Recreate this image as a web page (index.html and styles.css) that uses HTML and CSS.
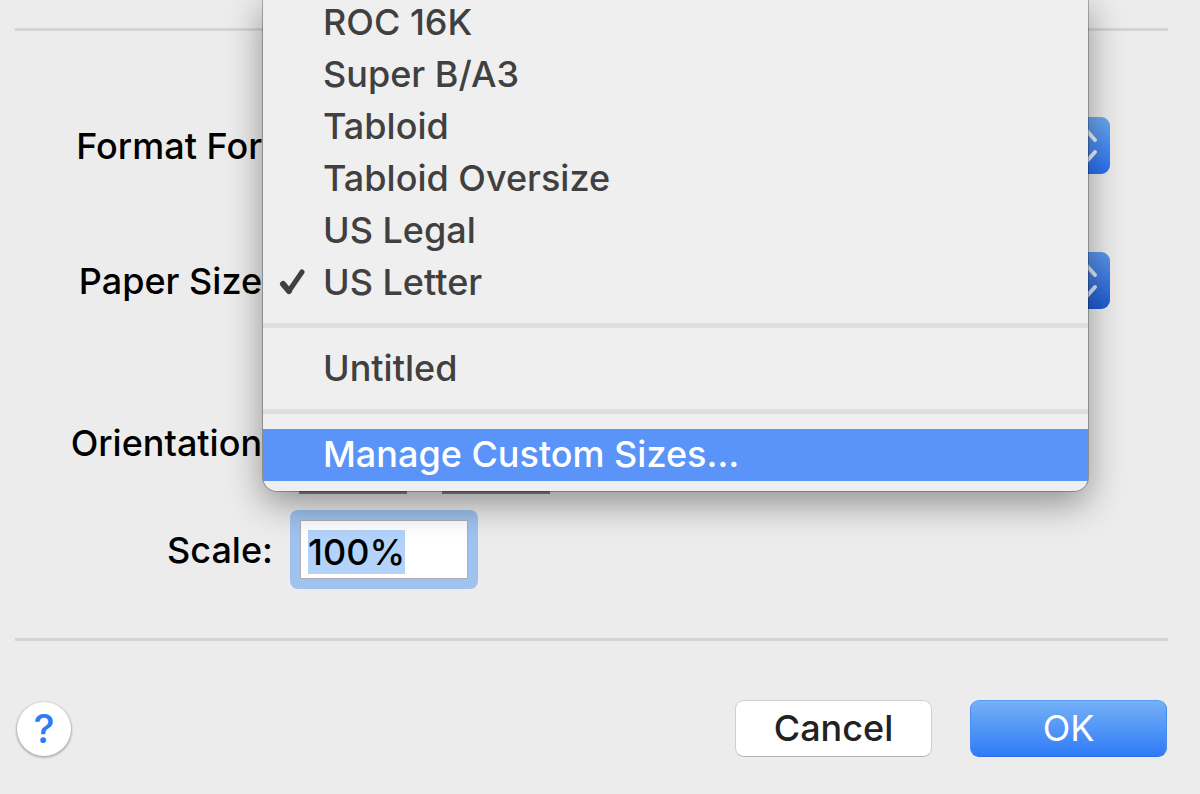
FILE: index.html
```
<!DOCTYPE html>
<html lang="en">

<head>
    <meta charset="UTF-8">
    <title>Page Setup</title>
    <link rel="stylesheet" href="styles.css">
</head>

<body>

    <form class="dialog">
        <hr class="divider">

        <div class="fields">
            <div class="row">
                <label class="label" for="format">Format For:</label>
                <div class="popup">
                    <select id="format" class="popup-select">
                        <option>Any Printer</option>
                    </select>
                    <svg class="popup-arrows" viewBox="0 0 44 57" fill="none" stroke="#eef4fb" stroke-width="4" stroke-linecap="round" stroke-linejoin="round">
                        <path d="M13 23 L21 14 L29 23 M13 35 L21 44 L29 35" />
                    </svg>
                </div>
            </div>

            <div class="row row-paper">
                <label class="label" for="paper">Paper Size:</label>
                <div class="popup popup-open">
                    <select id="paper" class="popup-select">
                        <option>US Letter</option>
                    </select>
                    <svg class="popup-arrows" viewBox="0 0 44 57" fill="none" stroke="#dfe9f8" stroke-width="4" stroke-linecap="round" stroke-linejoin="round">
                        <path d="M13 23 L21 14 L29 23 M13 35 L21 44 L29 35" />
                    </svg>
                </div>
            </div>

            <div class="row row-orientation">
                <span class="label">Orientation:</span>
                <div class="orientation">
                    <button type="button" class="orientation-btn" aria-label="Portrait"></button>
                    <button type="button" class="orientation-btn" aria-label="Landscape"></button>
                </div>
            </div>

            <div class="row row-scale">
                <label class="label" for="scale">Scale:</label>
                <div class="focus-ring">
                    <input id="scale" class="scale-input" type="text" value="100%">
                </div>
            </div>
        </div>

        <hr class="divider">

        <div class="footer">
            <button type="button" class="help" aria-label="Help">?</button>
            <button type="button" class="btn">Cancel</button>
            <button type="button" class="btn btn-primary">OK</button>
        </div>
    </form>

    <!-- paper size menu -->
    <div class="menu">
        <button type="button" class="menu-item">ROC 16K</button>
        <button type="button" class="menu-item">Super B/A3</button>
        <button type="button" class="menu-item">Tabloid</button>
        <button type="button" class="menu-item">Tabloid Oversize</button>
        <button type="button" class="menu-item">US Legal</button>
        <button type="button" class="menu-item">
            <svg class="check" viewBox="0 0 28 28" fill="none" stroke="#404040" stroke-linecap="round" stroke-linejoin="round">
                <path stroke-width="6" d="M5 16 L11 23" />
                <path stroke-width="5" d="M11 23 L24 4" />
            </svg>
            US Letter
        </button>
        <hr class="menu-line">
        <button type="button" class="menu-item">Untitled</button>
        <hr class="menu-line">
        <button type="button" class="menu-item active">Manage Custom Sizes…</button>
    </div>

    <script>
        const scale = document.getElementById("scale");
        scale.focus();
        scale.select();
    </script>

</body>

</html>
```
FILE: styles.css
```
* {
    box-sizing: border-box;
}

body {
    margin: 0;
    background-color: #ececec;
    color: #000;
    font-family: Inter, "Liberation Sans", sans-serif;
    font-size: 36px;
    font-weight: 450;
    position: relative;
    overflow: hidden;
}

button,
input,
select {
    font: inherit;
    margin: 0;
}

.dialog {
    padding: 28px 32px 37px 15px;
}

.divider {
    height: 3px;
    margin: 0;
    border: 0;
    background-color: #d5d5d5;
}

.fields {
    padding: 86px 58px 49px 0;
}

.row {
    display: grid;
    grid-template-columns: 258px 1fr;
    column-gap: 17px;
    align-items: center;
}

.row-paper {
    margin-top: 78px;
}

.row-orientation {
    margin-top: 83px;
}

.row-scale {
    margin-top: 16px;
}

.label {
    text-align: right;
    white-space: nowrap;
}

.popup {
    position: relative;
    height: 57px;
}

.popup-select {
    appearance: none;
    width: 100%;
    height: 100%;
    padding: 0 60px 0 20px;
    border: 1px solid #c8c8c8;
    border-radius: 9px;
    background-color: #fff;
}

.popup-arrows {
    position: absolute;
    top: 0;
    right: 0;
    width: 44px;
    height: 57px;
    border-radius: 0 9px 9px 0;
    background: linear-gradient(#6aaaf2, #2a6ff3);
    pointer-events: none;
}

.popup-open .popup-arrows {
    background: linear-gradient(#5b97ec, #1e5ad2);
}

.orientation {
    display: flex;
    gap: 35px;
    padding-left: 9px;
}

.orientation-btn {
    width: 108px;
    height: 102px;
    border: 3px solid #858282;
    background-color: #999;
}

.focus-ring {
    justify-self: start;
    padding: 10px;
    border-radius: 8px;
    background-color: #a0c2ee;
}

.scale-input {
    display: block;
    width: 168px;
    height: 59px;
    padding: 8px 7px 4px;
    border: 1px solid #a9aeb5;
    outline: none;
    background-color: #fff;
}

.scale-input::selection {
    background-color: #b3d3fb;
    color: #000;
}

.footer {
    display: flex;
    align-items: center;
    gap: 38px;
    padding: 59px 1px 0 2px;
}

.help {
    width: 54px;
    height: 54px;
    margin-right: auto;
    padding: 0;
    border: 0;
    border-radius: 50%;
    background-color: #fff;
    box-shadow: 0 1px 2px 1px rgba(0, 0, 0, 0.25);
    color: #2f7bf6;
    font-size: 40px;
}

.btn {
    width: 197px;
    height: 57px;
    padding: 0 0 2px;
    border: 1px solid #cfcfcf;
    border-bottom-color: #b5b5b5;
    border-radius: 9px;
    background-color: #fff;
    color: #222;
}

.btn-primary {
    border-color: #5c9cf0 #4a8bf2 #2a6bea;
    background: linear-gradient(#75b1f6, #2f7bf8);
    color: #fff;
    font-weight: 400;
}

.menu {
    position: absolute;
    top: -3px;
    left: 263px;
    right: 112px;
    padding-bottom: 10px;
    border-radius: 0 0 14px 14px;
    background-color: #efefef;
    box-shadow: 0 0 0 1px rgba(0, 0, 0, 0.25), 0 12px 36px rgba(0, 0, 0, 0.4);
}

.menu-item {
    display: block;
    position: relative;
    width: 100%;
    height: 52px;
    padding: 0 60px 2px;
    border: 0;
    background: none;
    color: #404040;
    text-align: left;
    white-space: nowrap;
}

.menu-item.active {
    background-color: #5a94f8;
    color: #fff;
}

.check {
    position: absolute;
    top: 11px;
    left: 15px;
    width: 28px;
    height: 28px;
}

.menu-line {
    height: 5px;
    margin: 14px 0 15px;
    border: 0;
    background-color: #dedede;
}
```
